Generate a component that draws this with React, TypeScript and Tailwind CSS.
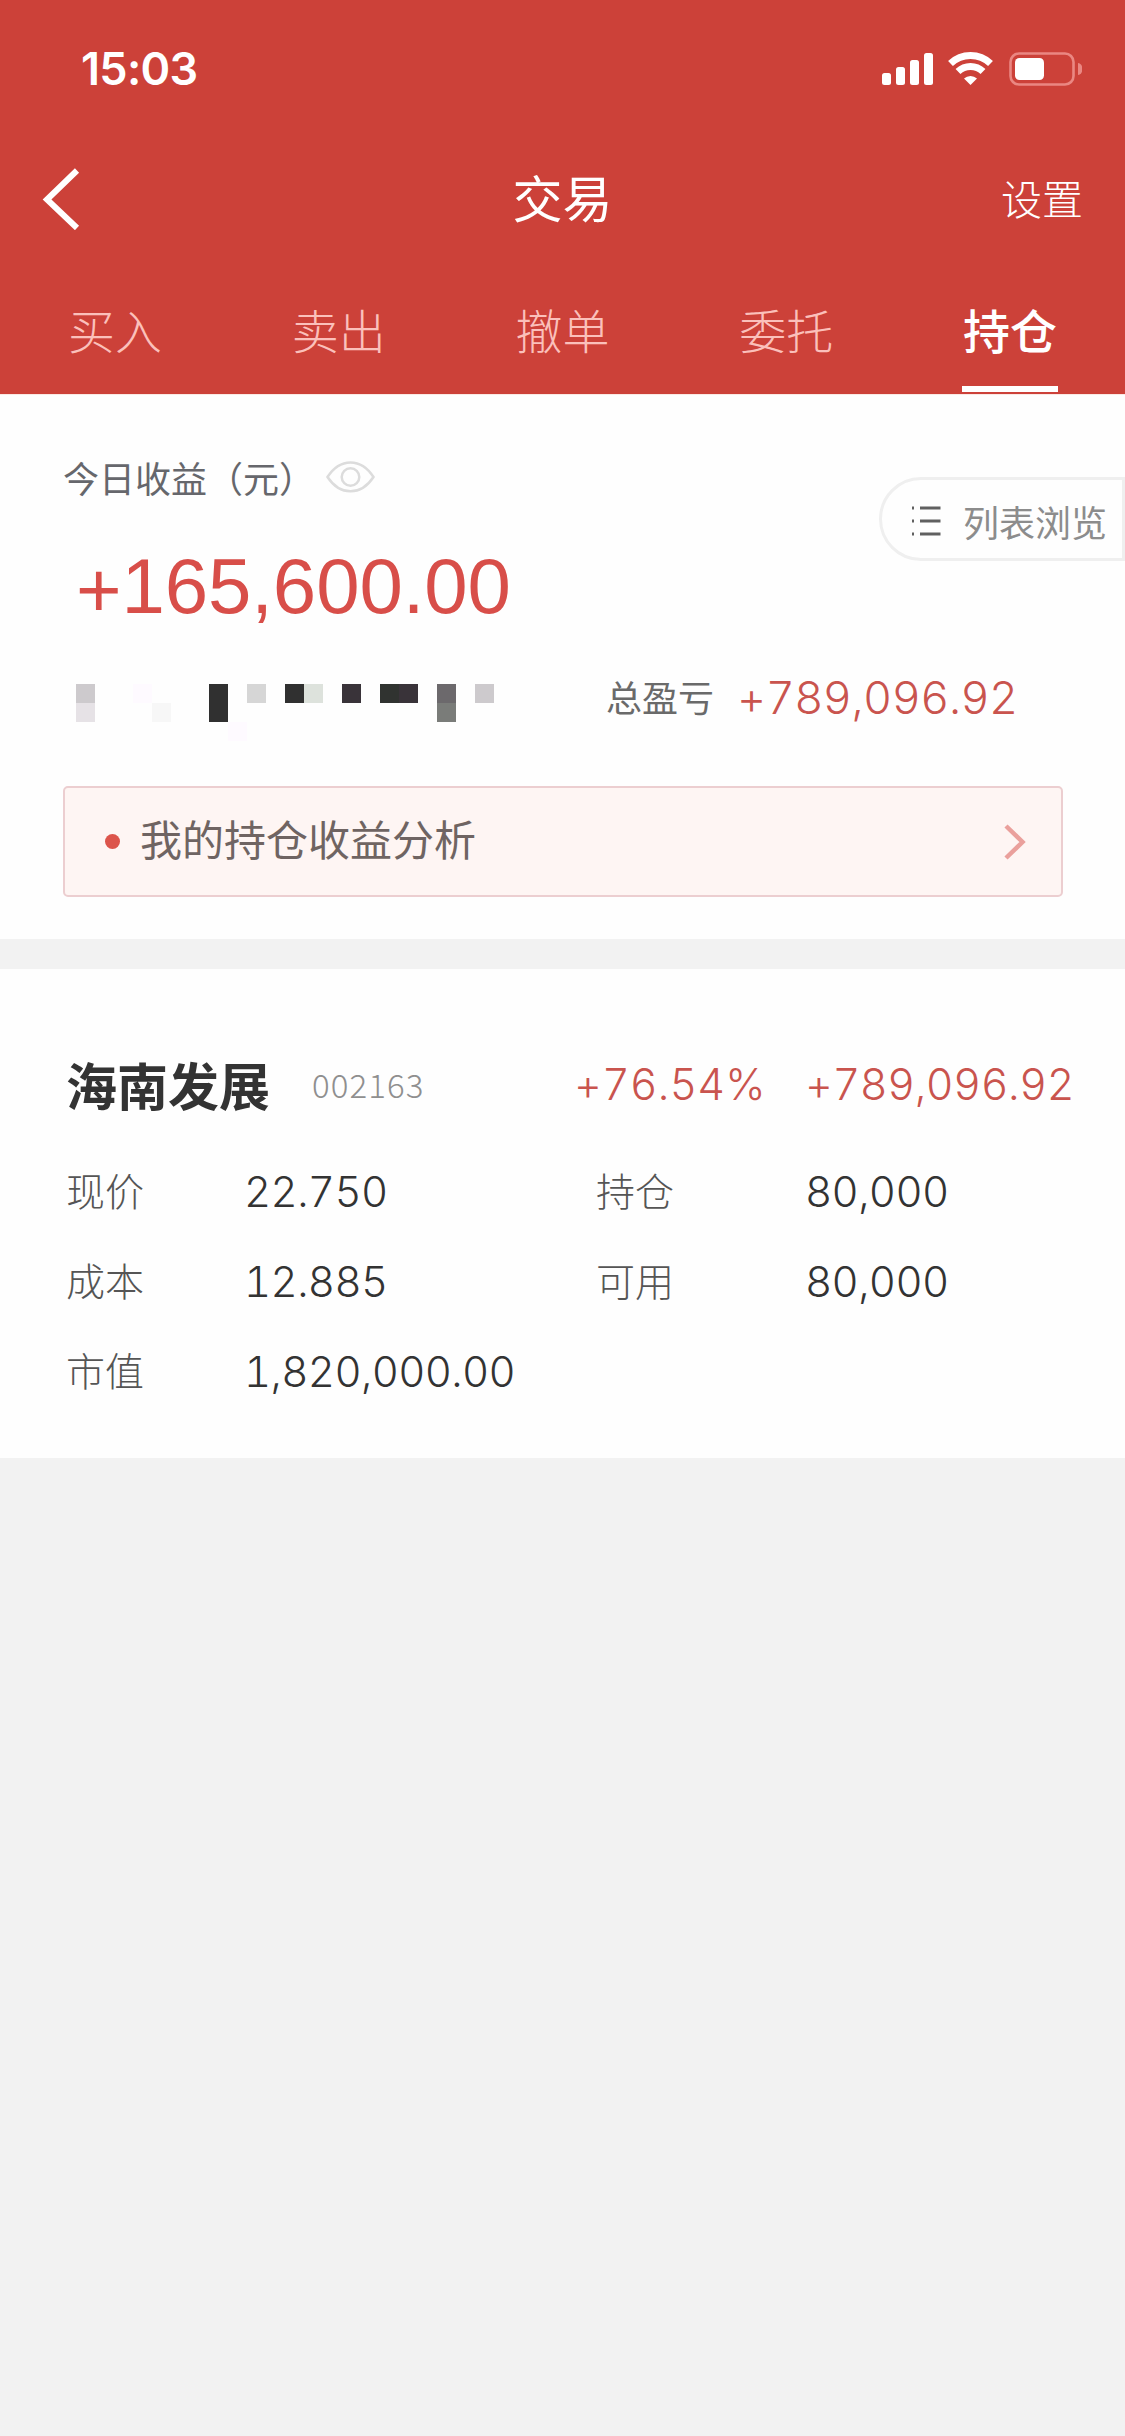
import React from 'react';

const tabs = ['买入', '卖出', '撤单', '委托', '持仓'];

// 22 x 3 grid of blocks that hides the total assets number
const mosaic = [
  { pos: 'col-start-1 row-start-1', color: 'bg-[#cdcacd]' },
  { pos: 'col-start-1 row-start-2', color: 'bg-[#e6e2e6]' },
  { pos: 'col-start-4 row-start-1', color: 'bg-[#fefaff]' },
  { pos: 'col-start-5 row-start-2', color: 'bg-[#f7f7f7]' },
  { pos: 'col-start-8 row-start-1', color: 'bg-[#303030]' },
  { pos: 'col-start-8 row-start-2', color: 'bg-[#303030]' },
  { pos: 'col-start-9 row-start-3', color: 'bg-[#fefaff]' },
  { pos: 'col-start-10 row-start-1', color: 'bg-[#d6d6d6]' },
  { pos: 'col-start-12 row-start-1', color: 'bg-[#303030]' },
  { pos: 'col-start-[13] row-start-1', color: 'bg-[#dde2dc]' },
  { pos: 'col-start-[15] row-start-1', color: 'bg-[#393339]' },
  { pos: 'col-start-[17] row-start-1', color: 'bg-[#303330]' },
  { pos: 'col-start-[18] row-start-1', color: 'bg-[#393339]' },
  { pos: 'col-start-[20] row-start-1', color: 'bg-[#6c696c]' },
  { pos: 'col-start-[20] row-start-2', color: 'bg-[#7a7c79]' },
  { pos: 'col-start-[22] row-start-1', color: 'bg-[#cdcacd]' },
];

const details = [
  { label: '现价', value: '22.750', label2: '持仓', value2: '80,000' },
  { label: '成本', value: '12.885', label2: '可用', value2: '80,000' },
  { label: '市值', value: '1,820,000.00', label2: '', value2: '' },
];

const StatusBar = () => (
  <div className="flex h-[138px] justify-between pl-[81px] pr-[43px] pt-[46px]">
    <span className="h-[45px] font-['Inter',sans-serif] text-[45px] font-semibold leading-[45px] tracking-[-0.7px]">15:03</span>
    <svg className="mt-[4px]" width="202" height="40" viewBox="0 0 202 40" fill="none">
      <g fill="#fff">
        <rect x="2" y="23" width="9" height="12" rx="2.5" />
        <rect x="16" y="17" width="9" height="18" rx="2.5" />
        <rect x="30" y="10" width="9" height="25" rx="2.5" />
        <rect x="44" y="3" width="9" height="32" rx="2.5" />
      </g>
      <g stroke="#fff" strokeWidth="7">
        <path d="M70.500 13.500 A29 29 0 0 1 110.500 13.500" />
        <path d="M78 21.500 A18 18 0 0 1 103 21.500" />
      </g>
      <path d="M90.500 35 L84 28.500 A9.500 9.500 0 0 1 97 28.500 Z" fill="#fff" />
      <rect x="130.500" y="3.500" width="63" height="31" rx="8.500" stroke="#ea8782" strokeWidth="2.600" />
      <rect x="135" y="8" width="29" height="22" rx="4.500" fill="#fff" />
      <path d="M198 13 A4.500 6 0 0 1 198 25 Z" fill="#ea8782" />
    </svg>
  </div>
);

const App = () => {
  return (
    <div className="min-h-[2436px] w-[1125px] overflow-hidden bg-[#f2f2f2] font-['Noto_Sans_CJK_SC',sans-serif]">
      <header className="h-[394px] bg-[#cc4139] text-white">
        <StatusBar />
        <div className="grid h-[122px] grid-cols-3 items-center pl-[42px] pr-[42px]">
          <svg width="40" height="62" viewBox="0 0 40 62" fill="none">
            <path d="M35 2.500 L5 31.500 L35 60" stroke="#fff" strokeWidth="6" />
          </svg>
          <h1 className="pb-[6px] text-center text-[50px] leading-[50px]">交易</h1>
          <span className="pb-[4px] text-right text-[41px] font-light leading-[41px]">设置</span>
        </div>
        <nav className="grid h-[133px] grid-cols-5 px-[3px]">
          {tabs.map((tab) =>
            tab === '持仓' ? (
              <div key={tab} className="flex flex-col items-center justify-between">
                <span className="pt-[44px] text-[47px] font-medium leading-[50px]">{tab}</span>
                <span className="mb-px h-[6px] w-[96px] bg-white" />
              </div>
            ) : (
              <div key={tab} className="pt-[44px] text-center text-[47px] font-light leading-[50px] text-[#fbc0bb]">
                {tab}
              </div>
            )
          )}
        </nav>
      </header>

      <section className="relative h-[545px] border-t border-[#fbe9e4] bg-[#fefefe] px-[63px] pt-[62px]">
        <div className="flex h-[40px] items-center">
          <span className="text-[36px] leading-[40px] text-[#66676c]">今日收益（元）</span>
          <svg className="ml-[11px]" width="49" height="34" viewBox="0 0 49 34" fill="none" stroke="#dcdcdc" strokeWidth="2.500">
            <path d="M1.500 17 C14 -2.500 35 -2.500 47.500 17 C35 36 14 36 1.500 17 Z" />
            <circle cx="24.500" cy="17" r="8.800" />
          </svg>
        </div>
        <div className="ml-[13px] mt-[44px] h-[90px] font-['Liberation_Sans',sans-serif] text-[78px] leading-[90px] tracking-[-0.1px] text-[#d84e49]">
          <span className="relative top-[4px]">+</span>165,600.00
        </div>
        <div className="mt-[53px] flex h-[57px] pl-[13px]">
          <div className="grid grid-cols-[repeat(22,19px)] grid-rows-[repeat(3,19px)]">
            {mosaic.map((m) => (
              <span key={m.pos} className={`${m.pos} ${m.color}`} />
            ))}
          </div>
          <span className="ml-[112px] text-[36px] leading-[25px] text-[#6a6a6a]">总盈亏</span>
          <span className="ml-[23px] font-['Inter',sans-serif] text-[45px] font-light tabular-nums leading-[28px] tracking-[-0.5px] text-[#c9544e]">+789,096.92</span>
        </div>
        <div className="mt-[45px] flex h-[111px] w-[1000px] items-center rounded-[5px] border-2 border-[#ecced0] bg-[#fef5f3] pl-[40px] pr-[34px]">
          <span className="h-[15px] w-[15px] rounded-full bg-[#dc544b]" />
          <span className="ml-[20px] pb-[7px] text-[42px] leading-[42px] text-[#6f6462]">我的持仓收益分析</span>
          <svg className="ml-auto" width="24" height="38" viewBox="0 0 24 38" fill="none">
            <path d="M3 3 L19.500 19 L3 35" stroke="#eaa09c" strokeWidth="4.500" />
          </svg>
        </div>

        {/* floating button on the right edge */}
        <button className="absolute right-0 top-[82px] flex h-[84px] w-[246px] items-center rounded-l-full border-[3px] border-[#efefef] bg-[#fefefe] pl-[30px] pt-[4px]">
          <svg width="29" height="30" viewBox="0 0 29 30" stroke="#606060" strokeWidth="2.800">
            <path d="M0 2 H2 M8 2 H28.500 M0 15 H2 M8 15 H28.500 M0 28 H2 M8 28 H28.500" />
          </svg>
          <span className="ml-[22px] whitespace-nowrap text-[36px] leading-[36px] text-[#8c8c8c]">列表浏览</span>
        </button>
      </section>

      <section className="mt-[30px] h-[489px] bg-[#fefefe] pl-[66px] pt-[89px]">
        <div className="flex h-[52px] items-center">
          <h2 className="w-[246px] text-[51px] font-bold leading-[52px] text-[#333]">海南发展</h2>
          <span className="w-[262px] text-[33px] font-light leading-[52px] tracking-[1.1px] text-[#8f8f8f]">002163</span>
          <span className="w-[231px] font-['Inter',sans-serif] text-[43px] font-light tabular-nums tracking-[0.1px] text-[#c9544e]">+76.54%</span>
          <span className="font-['Inter',sans-serif] text-[43px] font-light tabular-nums tracking-[-0.4px] text-[#c9544e]">+789,096.92</span>
        </div>
        <div className="mt-[36px]">
          {details.map((row) => (
            <div key={row.label} className="flex h-[90px] items-center">
              <span className="w-[178px] pb-[3px] text-[39px] font-light text-[#555]">{row.label}</span>
              <span className="w-[352px] font-['Inter',sans-serif] text-[42px] font-light tabular-nums tracking-[-0.6px] text-[#333]">{row.value}</span>
              <span className="w-[209px] pb-[3px] text-[39px] font-light text-[#555]">{row.label2}</span>
              <span className="font-['Inter',sans-serif] text-[42px] font-light tabular-nums tracking-[-0.6px] text-[#333]">{row.value2}</span>
            </div>
          ))}
        </div>
      </section>
    </div>
  );
};

export default App;
